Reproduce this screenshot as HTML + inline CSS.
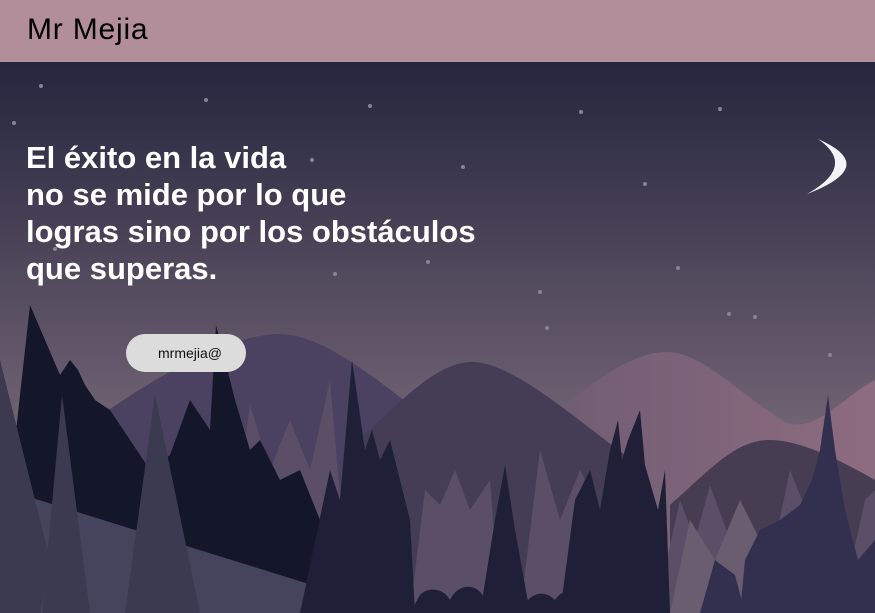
<!DOCTYPE html>
<html><head><meta charset="utf-8"><style>
html,body{margin:0;padding:0;width:875px;height:613px;overflow:hidden;background:#25273f;font-family:"Liberation Sans",sans-serif}
.hdr{position:absolute;left:0;top:0;width:875px;height:62px;background:#b28d9a}
.hdr span{position:absolute;left:27px;top:13px;font-size:30px;color:#000;letter-spacing:0.8px}
svg{position:absolute;left:0;top:62px}
.q{position:absolute;left:26px;top:139px;color:#fff;font-size:31px;font-weight:bold;line-height:37px;letter-spacing:0}
.btn{position:absolute;left:126px;top:334px;width:120px;height:38px;border-radius:19px;background:#dcdcdc;color:#111;font-size:14px;line-height:38px;text-align:center;text-indent:8px}
</style></head><body>
<div class="hdr"><span>Mr Mejia</span></div>
<svg width="875" height="551" viewBox="0 62 875 551">
<defs>
<linearGradient id="sky" x1="0" y1="62" x2="0" y2="420" gradientUnits="userSpaceOnUse">
<stop offset="0" stop-color="#24263e"/><stop offset="0.5" stop-color="#4a4358"/><stop offset="1" stop-color="#6f6272"/></linearGradient>
<linearGradient id="pink" x1="540" y1="0" x2="875" y2="0" gradientUnits="userSpaceOnUse">
<stop offset="0" stop-color="#6f5c72"/><stop offset="1" stop-color="#8e6c80"/></linearGradient>
</defs>
<rect x="0" y="62" width="875" height="551" fill="url(#sky)"/>
<g fill="#8a8296">
<circle cx="41" cy="86" r="2"/><circle cx="206" cy="100" r="2"/><circle cx="370" cy="106" r="2"/><circle cx="581" cy="112" r="2"/><circle cx="720" cy="109" r="2"/><circle cx="14" cy="123" r="2"/><circle cx="312" cy="160" r="2"/><circle cx="463" cy="167" r="2"/><circle cx="645" cy="184" r="2"/><circle cx="55" cy="249" r="2"/><circle cx="428" cy="262" r="2"/><circle cx="335" cy="274" r="2"/><circle cx="678" cy="268" r="2"/><circle cx="540" cy="292" r="2"/><circle cx="547" cy="328" r="2"/><circle cx="729" cy="314" r="2"/><circle cx="755" cy="317" r="2"/><circle cx="830" cy="355" r="2"/>
</g>
<path d="M818,139 Q880,166 807,194 Q857,166 818,139 Z" fill="#f4f4f8"/>
<path d="M540,425 C600,375 635,352 668,352 C705,354 740,395 785,422 C815,435 845,395 875,380 L875,613 L540,613 Z" fill="url(#pink)"/>
<path d="M80,430 C170,365 235,335 278,334 C320,334 365,370 430,420 L430,613 L80,613 Z" fill="#4b4161"/>
<path d="M355,445 C405,395 440,362 472,362 C510,362 565,410 625,455 L625,613 L355,613 Z" fill="#453c55"/>
<path d="M670,505 C710,470 735,440 770,440 C800,440 840,460 875,480 L875,613 L670,613 Z" fill="#463d52"/>
<g fill="#5b4f67">
<path d="M220,613 L250,405 L270,470 L290,420 L310,470 L330,380 L350,613 Z"/>
<path d="M410,613 L425,490 L440,505 L455,470 L470,510 L490,480 L500,613 Z"/>
<path d="M520,613 L540,450 L560,520 L580,470 L600,510 L615,613 Z"/>
<path d="M620,613 L650,520 L660,600 Z"/>
<path d="M655,613 L680,500 L695,540 L710,485 L730,540 L735,613 Z"/>
<path d="M760,613 L790,470 L810,520 L820,613 Z"/>
<path d="M840,613 L865,500 L875,490 L875,613 Z"/>
</g>
<g fill="#6a5d70">
<path d="M670,613 L690,520 L715,560 L740,500 L760,540 L770,613 Z"/>
<path d="M800,613 L812,480 L830,540 L838,613 Z"/>
</g>
<g fill="#14162a">
<path d="M0,613 L0,360 L15,440 L30,305 L60,375 L70,360 L78,370 L85,385 L95,400 L110,410 L130,440 L150,470 L170,455 L190,400 L210,430 L216,325 L235,400 L250,450 L260,440 L280,480 L300,470 L320,520 L345,560 L360,600 L0,488 Z"/>
</g>
<path d="M0,488 L360,600 L360,613 L0,613Z" fill="#45445c"/>
<g fill="#1f2038">
<path d="M300,613 L330,470 L340,500 L352,360 L365,450 L372,430 L380,460 L390,440 L410,520 L415,613 Z"/>
<path d="M480,613 L495,520 L505,465 L515,530 L530,613 Z"/>
<path d="M560,613 L575,500 L590,470 L600,510 L610,450 L618,420 L622,460 L628,440 L640,410 L645,465 L658,510 L665,470 L670,613 Z"/>
<path d="M410,613 L420,595 C430,585 445,590 450,600 C460,580 480,585 485,600 L485,613 Z"/>
<path d="M520,613 C530,590 545,590 555,600 C565,585 580,590 585,613 Z"/>
</g>
<g fill="#32304e">
<path d="M740,613 L745,560 L760,530 L780,520 L800,505 L812,480 L820,450 L828,395 L835,450 L845,510 L858,560 L875,540 L875,613 Z"/>
<path d="M700,613 L715,560 L735,575 L745,613 Z"/>
</g>
<g fill="#3c3a50">
<path d="M0,360 L50,560 L40,613 L0,613 Z"/>
<path d="M62,395 L90,613 L42,613 Z"/>
<path d="M155,395 L200,613 L125,613 Z"/>
</g>
</svg>
<div class="q">El éxito en la vida<br>no se mide por lo que<br>logras sino por los obstáculos<br>que superas.</div>
<div class="btn">mrmejia@</div>
</body></html>
